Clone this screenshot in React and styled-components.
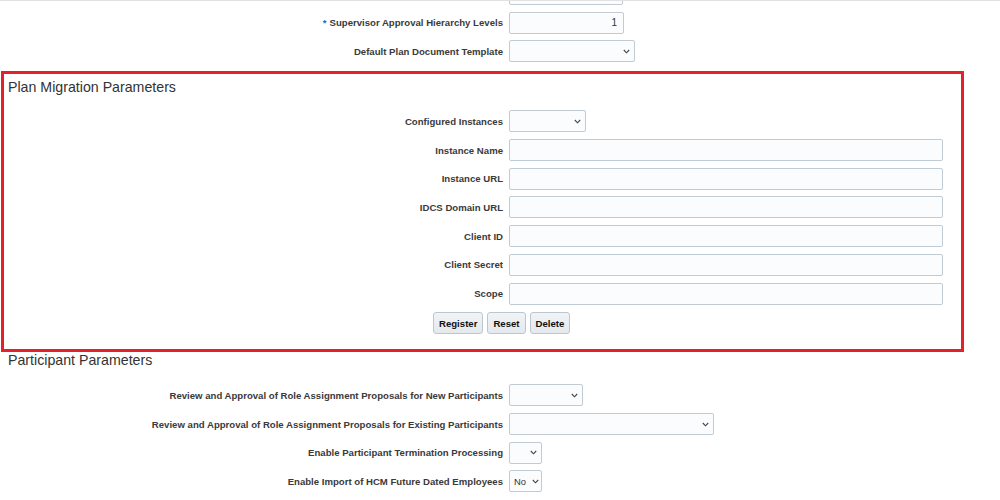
import React from "react";
import styled, { createGlobalStyle } from "styled-components";

const GlobalStyle = createGlobalStyle`
  html, body { margin: 0; padding: 0; background: #ffffff; }
  body { font-family: "Liberation Sans", Arial, sans-serif; color: #333333; }
  * { box-sizing: border-box; }
`;

const Page = styled.div`
  width: 1000px;
  height: 500px;
  overflow: hidden;
  border-top: 1px solid #e1e1e1;
`;

const FormGrid = styled.div`
  display: grid;
  grid-template-columns: ${(p) => p.$labelWidth}px auto;
  column-gap: 6px;
  row-gap: 6.7px;
  align-items: center;
  justify-items: start;
`;

const Label = styled.label`
  justify-self: end;
  font-size: 9.6px;
  font-weight: bold;
  color: #3a3a3a;
  white-space: nowrap;
`;

const Required = styled.span`
  color: #0572ce;
  margin-right: 3px;
`;

const Clip = styled.div`
  grid-column: 2;
  height: 4px;
  overflow: hidden;
  display: flex;
  align-items: flex-end;
`;

const TextInput = styled.input`
  width: ${(p) => p.$w}px;
  height: 22px;
  margin: 0;
  padding: 0 6px;
  border: 1px solid #c1cbd4;
  border-radius: 2px;
  background: #fbfcfd;
  font-family: "Liberation Sans", Arial, sans-serif;
  font-size: 10px;
  color: #333;
  text-align: ${(p) => (p.$right ? "right" : "left")};
  outline: none;
`;

const SelectBox = styled.div`
  width: ${(p) => p.$w}px;
  height: 22px;
  border: 1px solid #c1cbd4;
  border-radius: 2px;
  background: #fbfcfd;
  display: flex;
  align-items: center;
  justify-content: space-between;
  gap: 6px;
  padding: 0 4px 0 4px;
  font-size: 9.4px;
  color: #333;
`;

const Chevron = styled.svg`
  width: 7px;
  height: 5px;
  flex: none;
`;

const Select = ({ w, value }) => (
  <SelectBox $w={w}>
    <span>{value || ""}</span>
    <Chevron viewBox="0 0 7 5">
      <polyline points="0.8,1 3.5,3.8 6.2,1" fill="none" stroke="#444" strokeWidth="1.1" />
    </Chevron>
  </SelectBox>
);

const TopForm = styled(FormGrid)`
  padding-bottom: 9px;
`;

const Box = styled.section`
  margin-left: 1px;
  width: 963px;
  height: 281px;
  border: 3px solid #e3212b;
  padding: 5px 0 0 4px;
`;

const Heading = styled.h2`
  margin: 0;
  font-size: 14.2px;
  font-weight: normal;
  line-height: 16px;
  color: #333333;
  padding-left: ${(p) => p.$indent || 0}px;
`;

const BoxForm = styled(FormGrid)`
  margin-top: 15px;
`;

const ButtonBar = styled.div`
  grid-column: 1 / -1;
  display: flex;
  gap: 4px;
  padding-left: 425px;
  margin-top: 1.3px;
`;

const Button = styled.button`
  height: 22px;
  padding: 0 5px;
  border: 1px solid #bcc6cf;
  border-radius: 3px;
  background: linear-gradient(#f1f4f6, #e4e9ed);
  font-family: "Liberation Sans", Arial, sans-serif;
  font-size: 9.6px;
  font-weight: bold;
  color: #111;
`;

const ParticipantForm = styled(FormGrid)`
  margin-top: 16px;
`;

const textFields = ["Instance Name", "Instance URL", "IDCS Domain URL", "Client ID", "Client Secret", "Scope"];

export default function App() {
  return (
    <>
      <GlobalStyle />
      <Page>
        <TopForm $labelWidth={503}>
          <Clip>
            <TextInput $w={114} readOnly />
          </Clip>
          <Label>
            <Required>*</Required>Supervisor Approval Hierarchy Levels
          </Label>
          <TextInput $w={115} $right defaultValue="1" readOnly />
          <Label>Default Plan Document Template</Label>
          <Select w={126} />
        </TopForm>

        <Box>
          <Heading>Plan Migration Parameters</Heading>
          <BoxForm $labelWidth={495}>
            <Label>Configured Instances</Label>
            <Select w={77} />
            {textFields.map((f) => (
              <React.Fragment key={f}>
                <Label>{f}</Label>
                <TextInput $w={434} readOnly />
              </React.Fragment>
            ))}
            <ButtonBar>
              <Button>Register</Button>
              <Button>Reset</Button>
              <Button>Delete</Button>
            </ButtonBar>
          </BoxForm>
        </Box>

        <Heading $indent={8}>Participant Parameters</Heading>
        <ParticipantForm $labelWidth={503}>
          <Label>Review and Approval of Role Assignment Proposals for New Participants</Label>
          <Select w={74} />
          <Label>Review and Approval of Role Assignment Proposals for Existing Participants</Label>
          <Select w={205} />
          <Label>Enable Participant Termination Processing</Label>
          <Select w={33} />
          <Label>Enable Import of HCM Future Dated Employees</Label>
          <Select w={33} value="No" />
        </ParticipantForm>
      </Page>
    </>
  );
}
